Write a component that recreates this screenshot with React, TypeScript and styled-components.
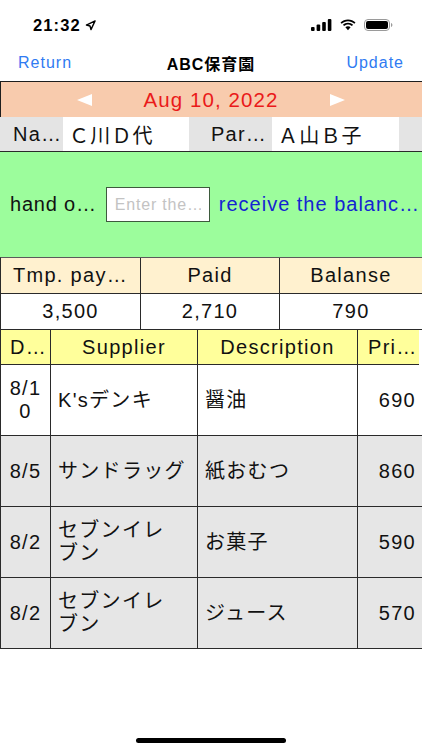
import React from "react";
import styled, { createGlobalStyle } from "styled-components";

const GlobalStyle = createGlobalStyle`
  html, body { margin: 0; padding: 0; background: #ffffff; }
  body {
    font-family: "Liberation Sans", "Noto Sans CJK JP", Arial, sans-serif;
    color: #111;
  }
  * { box-sizing: border-box; }
`;

const Screen = styled.div`
  width: 422px;
  height: 750px;
  overflow: hidden;
  background: #fff;
  display: flex;
  flex-direction: column;
`;

const StatusBar = styled.div`
  height: 44px;
  flex: none;
  display: flex;
  align-items: center;
  justify-content: space-between;
  padding: 6px 29px 0 33px;
`;

const Time = styled.div`
  display: flex;
  align-items: center;
  gap: 4px;
  font-weight: 700;
  font-size: 16.5px;
  letter-spacing: 1.1px;
  color: #000;
`;

const StatusIcons = styled.div`
  display: flex;
  align-items: center;
  gap: 8px;
`;

const NavBar = styled.div`
  height: 37px;
  flex: none;
  display: grid;
  grid-template-columns: 1fr auto 1fr;
  align-items: center;
  padding: 0 18px;
`;

const NavButton = styled.span<{ $align: "left" | "right" }>`
  justify-self: ${(p) => (p.$align === "left" ? "start" : "end")};
  color: #2f7bf2;
  font-size: 16px;
  letter-spacing: 1px;
`;

const NavTitle = styled.span`
  font-weight: 700;
  font-size: 16px;
  letter-spacing: 1px;
  color: #000;
`;

const DateBar = styled.div`
  height: 36px;
  flex: none;
  background: #f8cbad;
  border-top: 1px solid #1e1e1e;
  border-left: 1px solid #1e1e1e;
  display: flex;
  align-items: center;
  justify-content: center;
  gap: 51px;
  padding-right: 1px;
`;

const DateText = styled.span`
  color: #ea1a1a;
  font-size: 20.5px;
  letter-spacing: 1.1px;
`;

const NameRow = styled.div`
  height: 35px;
  flex: none;
  display: grid;
  grid-template-columns: 63px 126px 83px 127px 1fr;
  background: #e4e4e4;
  border-bottom: 1px solid #2a2a2a;
`;

const NameCell = styled.div<{ $kind: "label" | "value" | "empty"; $right?: boolean }>`
  display: flex;
  align-items: center;
  justify-content: ${(p) => (p.$right ? "flex-end" : "flex-start")};
  padding: ${(p) => (p.$kind === "label" ? (p.$right ? "0 5px 0 0" : "0 0 0 13px") : "0 0 0 6px")};
  background: ${(p) => (p.$kind === "value" ? "#ffffff" : "#e4e4e4")};
  font-size: 20px;
  letter-spacing: 1.2px;
  white-space: nowrap;
  overflow: hidden;
  color: #111;
`;

const PayPanel = styled.div`
  height: 105px;
  flex: none;
  background: #9cfd9c;
  display: flex;
  align-items: center;
  padding: 0 0 0 10px;
  gap: 9px;
`;

const PanelLabel = styled.span`
  font-size: 20px;
  letter-spacing: 0.8px;
  color: #111;
  white-space: nowrap;
`;

const AmountInput = styled.input`
  width: 104px;
  height: 35px;
  flex: none;
  border: 1.5px solid #3d5a3d;
  background: #fff;
  padding: 0 8px;
  font-family: "Liberation Sans", Arial, sans-serif;
  font-size: 16px;
  letter-spacing: 0.8px;
  outline: none;
  &::placeholder { color: #c3c3c3; }
`;

const BalanceLink = styled.span`
  font-size: 20px;
  letter-spacing: 1px;
  color: #1424d2;
  white-space: nowrap;
  overflow: hidden;
`;

const SummaryGrid = styled.div`
  flex: none;
  display: grid;
  grid-template-columns: 140px 139px 1fr;
  grid-template-rows: 36px 36px;
  border-top: 1px solid #5a5a5a;
  border-left: 1px solid #2a2a2a;
`;

const SummaryCell = styled.div<{ $head?: boolean; $last?: boolean }>`
  display: flex;
  align-items: center;
  justify-content: center;
  background: ${(p) => (p.$head ? "#fff1cf" : "#ffffff")};
  border-right: ${(p) => (p.$last ? "none" : "1px solid #2a2a2a")};
  border-bottom: 1px solid #2a2a2a;
  font-size: 20px;
  letter-spacing: 1.3px;
  white-space: nowrap;
  overflow: hidden;
  color: #111;
`;

const ItemsHead = styled.div`
  flex: none;
  height: 35px;
  margin-right: 3px;
  display: grid;
  grid-template-columns: 50px 147px 160px 1fr;
  background: #ffff9b;
  border-left: 1px solid #2a2a2a;
  border-bottom: 1px solid #2a2a2a;
`;

const ItemRow = styled.div<{ $shade: boolean }>`
  flex: none;
  height: 71px;
  display: grid;
  grid-template-columns: 50px 147px 160px 1fr;
  background: ${(p) => (p.$shade ? "#e6e6e6" : "#ffffff")};
  border-left: 1px solid #2a2a2a;
  border-bottom: 1px solid #2a2a2a;
`;

type Align = "left" | "center" | "right";

const Cell = styled.div<{ $align: Align; $last?: boolean; $pad?: string }>`
  display: flex;
  align-items: center;
  justify-content: ${(p) =>
    p.$align === "center" ? "center" : p.$align === "right" ? "flex-end" : "flex-start"};
  text-align: ${(p) => p.$align};
  padding: ${(p) => p.$pad ?? "0 8px"};
  border-right: ${(p) => (p.$last ? "none" : "1px solid #2a2a2a")};
  font-size: 20px;
  line-height: 23px;
  letter-spacing: 1.3px;
  color: #111;
  overflow: hidden;
  white-space: pre-line;
`;

const DateValue = styled.span`
  word-break: break-all;
`;

const Filler = styled.div`
  flex: 1;
  display: flex;
  align-items: flex-end;
  justify-content: center;
  padding-bottom: 7px;
`;

const HomeIndicator = styled.div`
  width: 150px;
  height: 5px;
  border-radius: 3px;
  background: #000;
`;

const ArrowLeft = () => (
  <svg width="15" height="12" viewBox="0 0 15 12">
    <polygon points="0,6 15,0 15,12" fill="#ffffff" />
  </svg>
);

const ArrowRight = () => (
  <svg width="15" height="12" viewBox="0 0 15 12">
    <polygon points="15,6 0,0 0,12" fill="#ffffff" />
  </svg>
);

const LocationArrow = () => (
  <svg width="11" height="11" viewBox="0 0 24 24" fill="none" stroke="#000" strokeWidth="3" strokeLinejoin="round">
    <polygon points="3 11 22 2 13 21 11 13 3 11" />
  </svg>
);

const Signal = () => (
  <svg width="21" height="12" viewBox="0 0 21 12">
    <rect x="0" y="8" width="3.6" height="4" rx="1" fill="#000" />
    <rect x="5.6" y="5.5" width="3.6" height="6.5" rx="1" fill="#000" />
    <rect x="11.2" y="3" width="3.6" height="9" rx="1" fill="#000" />
    <rect x="16.8" y="0" width="3.6" height="12" rx="1" fill="#000" />
  </svg>
);

const Wifi = () => (
  <svg width="16" height="12" viewBox="0 0 16 12">
    <path d="M8 2.2c2.4 0 4.6 0.9 6.3 2.5l1.2-1.3C13.5 1.5 10.9 0.4 8 0.4S2.5 1.5 0.5 3.4l1.2 1.3C3.4 3.1 5.6 2.2 8 2.2z" fill="#000" />
    <path d="M8 5.6c1.5 0 2.8 0.6 3.9 1.5l1.2-1.3C11.8 4.6 10 3.8 8 3.8S4.2 4.6 2.9 5.8l1.2 1.3C5.2 6.2 6.5 5.6 8 5.6z" fill="#000" />
    <path d="M8 7.3c-1 0-1.900 0.4-2.6 1L8 11.2l2.6-2.9C9.9 7.7 9 7.3 8 7.3z" fill="#000" />
  </svg>
);

const Battery = () => (
  <svg width="29" height="12" viewBox="0 0 29 12">
    <rect x="0.5" y="0.5" width="25" height="11" rx="3.5" fill="none" stroke="#9a9a9a" strokeWidth="1" />
    <rect x="2" y="2" width="22" height="8" rx="2" fill="#000" />
    <path d="M27 4v4c0.8-0.3 1.4-1.1 1.4-2s-0.6-1.7-1.4-2z" fill="#9a9a9a" />
  </svg>
);

type Item = { date: string; supplier: string; desc: string; price: string };

const items: Item[] = [
  { date: "8/10", supplier: "K'sデンキ", desc: "醤油", price: "690" },
  { date: "8/5", supplier: "サンドラッグ", desc: "紙おむつ", price: "860" },
  { date: "8/2", supplier: "セブンイレ\nブン", desc: "お菓子", price: "590" },
  { date: "8/2", supplier: "セブンイレ\nブン", desc: "ジュース", price: "570" },
];

export default function App() {
  return (
    <>
      <GlobalStyle />
      <Screen>
        <StatusBar>
          <Time>
            21:32
            <LocationArrow />
          </Time>
          <StatusIcons>
            <Signal />
            <Wifi />
            <Battery />
          </StatusIcons>
        </StatusBar>

        <NavBar>
          <NavButton $align="left">Return</NavButton>
          <NavTitle>ABC保育園</NavTitle>
          <NavButton $align="right">Update</NavButton>
        </NavBar>

        <DateBar>
          <ArrowLeft />
          <DateText>Aug 10, 2022</DateText>
          <ArrowRight />
        </DateBar>

        <NameRow>
          <NameCell $kind="label">Na…</NameCell>
          <NameCell $kind="value">Ｃ川Ｄ代</NameCell>
          <NameCell $kind="label" $right>Par…</NameCell>
          <NameCell $kind="value">Ａ山Ｂ子</NameCell>
          <NameCell $kind="empty" />
        </NameRow>

        <PayPanel>
          <PanelLabel>hand o…</PanelLabel>
          <AmountInput placeholder="Enter the…" />
          <BalanceLink>receive the balanc…</BalanceLink>
        </PayPanel>

        <SummaryGrid>
          <SummaryCell $head>Tmp. pay…</SummaryCell>
          <SummaryCell $head>Paid</SummaryCell>
          <SummaryCell $head $last>Balanse</SummaryCell>
          <SummaryCell>3,500</SummaryCell>
          <SummaryCell>2,710</SummaryCell>
          <SummaryCell $last>790</SummaryCell>
        </SummaryGrid>

        <ItemsHead>
          <Cell $align="left" $pad="0 0 0 9px">D…</Cell>
          <Cell $align="center">Supplier</Cell>
          <Cell $align="center">Description</Cell>
          <Cell $align="left" $pad="0 0 0 10px" $last>Pri…</Cell>
        </ItemsHead>

        {items.map((it, i) => (
          <ItemRow key={i} $shade={i > 0}>
            <Cell $align="center" $pad="0 4px">
              <DateValue>{it.date}</DateValue>
            </Cell>
            <Cell $align="left" $pad="0 6px 0 7px">{it.supplier}</Cell>
            <Cell $align="left" $pad="0 6px 0 7px">{it.desc}</Cell>
            <Cell $align="right" $pad="0 6px 0 0" $last>{it.price}</Cell>
          </ItemRow>
        ))}

        <Filler>
          <HomeIndicator />
        </Filler>
      </Screen>
    </>
  );
}
